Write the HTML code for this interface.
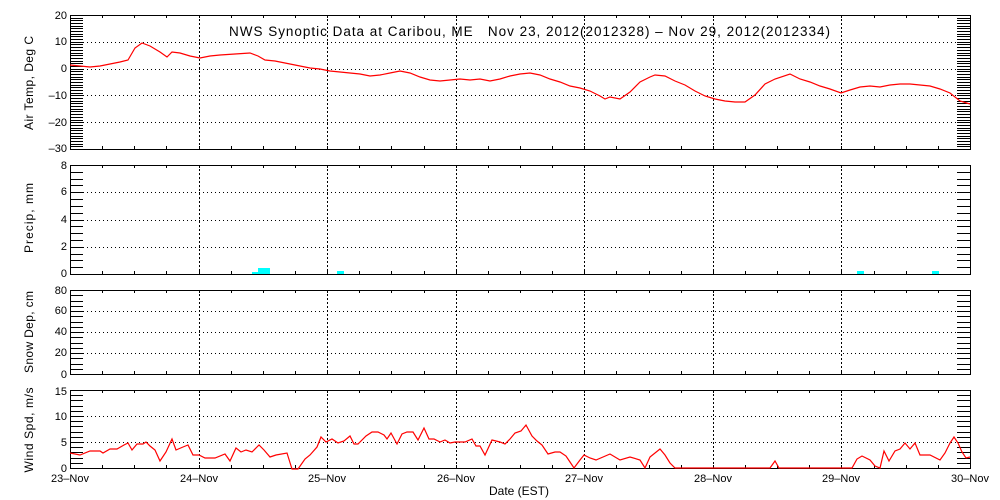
<!DOCTYPE html>
<html><head><meta charset="utf-8"><style>
html,body{margin:0;padding:0;background:#fff;}
svg{display:block;}
text{font-family:"Liberation Sans",sans-serif;font-size:11px;fill:#000;}
</style></head><body>
<svg id="s" width="1000" height="500" viewBox="0 0 1000 500" xmlns="http://www.w3.org/2000/svg" shape-rendering="crispEdges">
<g id="g"></g>
<text x="229" y="36" textLength="601" lengthAdjust="spacing" style="font-size:13.5px;white-space:pre" xml:space="preserve">NWS Synoptic Data at Caribou, ME   Nov 23, 2012(2012328) – Nov 29, 2012(2012334)</text>
<g text-anchor="end">
<text x="67" y="19">20</text><text x="67" y="45">10</text><text x="67" y="72">0</text><text x="67" y="99">–10</text><text x="67" y="126">–20</text><text x="67" y="152">–30</text>
<text x="67" y="169">8</text><text x="67" y="195">6</text><text x="67" y="223">4</text><text x="67" y="250">2</text><text x="67" y="277">0</text>
<text x="67" y="294">80</text><text x="67" y="314">60</text><text x="67" y="335">40</text><text x="67" y="356">20</text><text x="67" y="378">0</text>
<text x="67" y="395">15</text><text x="67" y="420">10</text><text x="67" y="446">5</text><text x="67" y="472">0</text>
</g>
<text transform="translate(33,83) rotate(-90)" text-anchor="middle" textLength="94" lengthAdjust="spacing" style="font-size:12px">Air Temp, Deg C</text>
<text transform="translate(33,218) rotate(-90)" text-anchor="middle" textLength="70" lengthAdjust="spacing" style="font-size:12px">Precip, mm</text>
<text transform="translate(33,332) rotate(-90)" text-anchor="middle" textLength="82" lengthAdjust="spacing" style="font-size:12px">Snow Dep, cm</text>
<text transform="translate(33,430) rotate(-90)" text-anchor="middle" textLength="85" lengthAdjust="spacing" style="font-size:12px">Wind Spd, m/s</text>
<g text-anchor="middle">
<text x="70" y="482">23–Nov</text><text x="199" y="482">24–Nov</text><text x="327" y="482">25–Nov</text><text x="456" y="482">26–Nov</text><text x="584" y="482">27–Nov</text><text x="713" y="482">28–Nov</text><text x="841" y="482">29–Nov</text><text x="970" y="482">30–Nov</text>
<text x="519" y="495" style="font-size:12px">Date (EST)</text>
</g>
</svg>
<script>
var g=document.getElementById('g'),h='';
function L(x1,y1,x2,y2,ex){h+='<line x1="'+x1+'" y1="'+y1+'" x2="'+x2+'" y2="'+y2+'" stroke="#000" stroke-width="1" '+(ex||'')+'/>';}
var days=[70,199,327,456,584,713,841,970];
var panels=[[15,149,50,1,10],[165,274,8,0.5,2],[290,374,80,5,20],[390,468,15,1,5]];
panels.forEach(function(p){
 var t=p[0],b=p[1],r=p[2],st=p[3],mj=p[4];
 for(var v=0;v<=r+1e-6;v+=st){var y=Math.round(b-(b-t)*v/r)+0.5;L(70,y,83,y);L(957,y,970,y);}
 for(var v=mj;v<r-1e-6;v+=mj){var y=Math.round(b-(b-t)*v/r)+0.5;L(83,y,957,y,'stroke-dasharray="1,3"');}
 for(var i=1;i<7;i++){var x=days[i]+0.5;L(x,t,x,b,'stroke-dasharray="2,2"');}
 for(var i=1;i<28;i++){var x=Math.round(70+900*i/28)+0.5;L(x,t,x,t+3);L(x,b,x,b-3);}
 h+='<rect x="70.5" y="'+(t+0.5)+'" width="900" height="'+(b-t)+'" fill="none" stroke="#000" stroke-width="1.2"/>';
});
h+='<rect x="252" y="272" width="6" height="2" fill="#0ff"/><rect x="258" y="268" width="12" height="6" fill="#0ff"/><rect x="337" y="271" width="7" height="3" fill="#0ff"/><rect x="857" y="271" width="7" height="3" fill="#0ff"/><rect x="932" y="271" width="7" height="3" fill="#0ff"/>';
var temp=[70,65,80,66,90,67,100,66,110,64,120,62,128,60,135,48,142,43,150,46,160,52,167,57,172,52,180,53,190,56,200,58,210,56,220,55,235,54,250,53,258,56,265,60,275,61,290,64,300,66,310,68,320,69,330,71,340,72,350,73,360,74,370,76,380,75,390,73,400,71,410,73,420,77,430,80,440,81,450,80,460,79,470,80,480,79,490,81,500,79,510,76,520,74,530,73,540,75,550,79,560,82,570,86,580,88,590,91,600,96,605,99,610,97,620,99,630,92,640,82,650,77,655,75,665,76,675,81,685,85,695,91,705,96,715,99,725,101,735,102,745,102,755,95,765,84,775,79,790,74,800,79,810,82,820,86,830,89,841,93,850,90,860,87,870,86,880,87,890,85,900,84,910,84,920,85,930,86,940,89,950,93,960,101,970,104];
var wind=[70,453,80,455,90,451,100,451,103,453,110,449,117,449,124,445,128,443,132,450,137,444,143,444,146,442,150,446,155,450,160,461,166,452,172,439,176,450,183,447,188,445,193,455,199,455,205,458,215,458,225,454,230,461,236,448,241,452,246,450,252,452,259,445,264,450,270,457,276,455,287,453,292,469,298,469,305,459,310,455,317,447,321,437,326,442,332,439,338,443,344,441,350,436,354,444,358,444,366,436,372,432,378,432,384,435,387,439,391,433,397,444,402,434,407,432,413,432,418,440,424,428,429,439,434,439,440,442,445,440,450,443,455,442,465,442,472,439,476,446,480,446,485,455,492,440,500,442,505,444,510,439,515,433,521,431,526,425,532,436,537,441,542,445,548,454,555,452,560,452,566,456,570,462,574,468,580,460,584,455,590,458,596,460,610,454,620,460,630,457,640,460,645,468,650,457,660,449,665,455,670,463,675,468,770,468,775,461,779,468,852,468,857,459,862,456,870,460,875,466,880,468,884,451,889,461,895,451,900,449,905,443,910,449,915,443,920,455,930,455,940,460,945,453,950,443,954,437,958,443,962,452,966,458,970,457];
function P(a){var s='';for(var i=0;i<a.length;i+=2)s+=a[i]+','+a[i+1]+' ';return '<polyline points="'+s+'" fill="none" stroke="#f00" stroke-width="1.2" shape-rendering="auto"/>';}
h+=P(temp)+P(wind);
g.innerHTML=h;
</script>
</body></html>
